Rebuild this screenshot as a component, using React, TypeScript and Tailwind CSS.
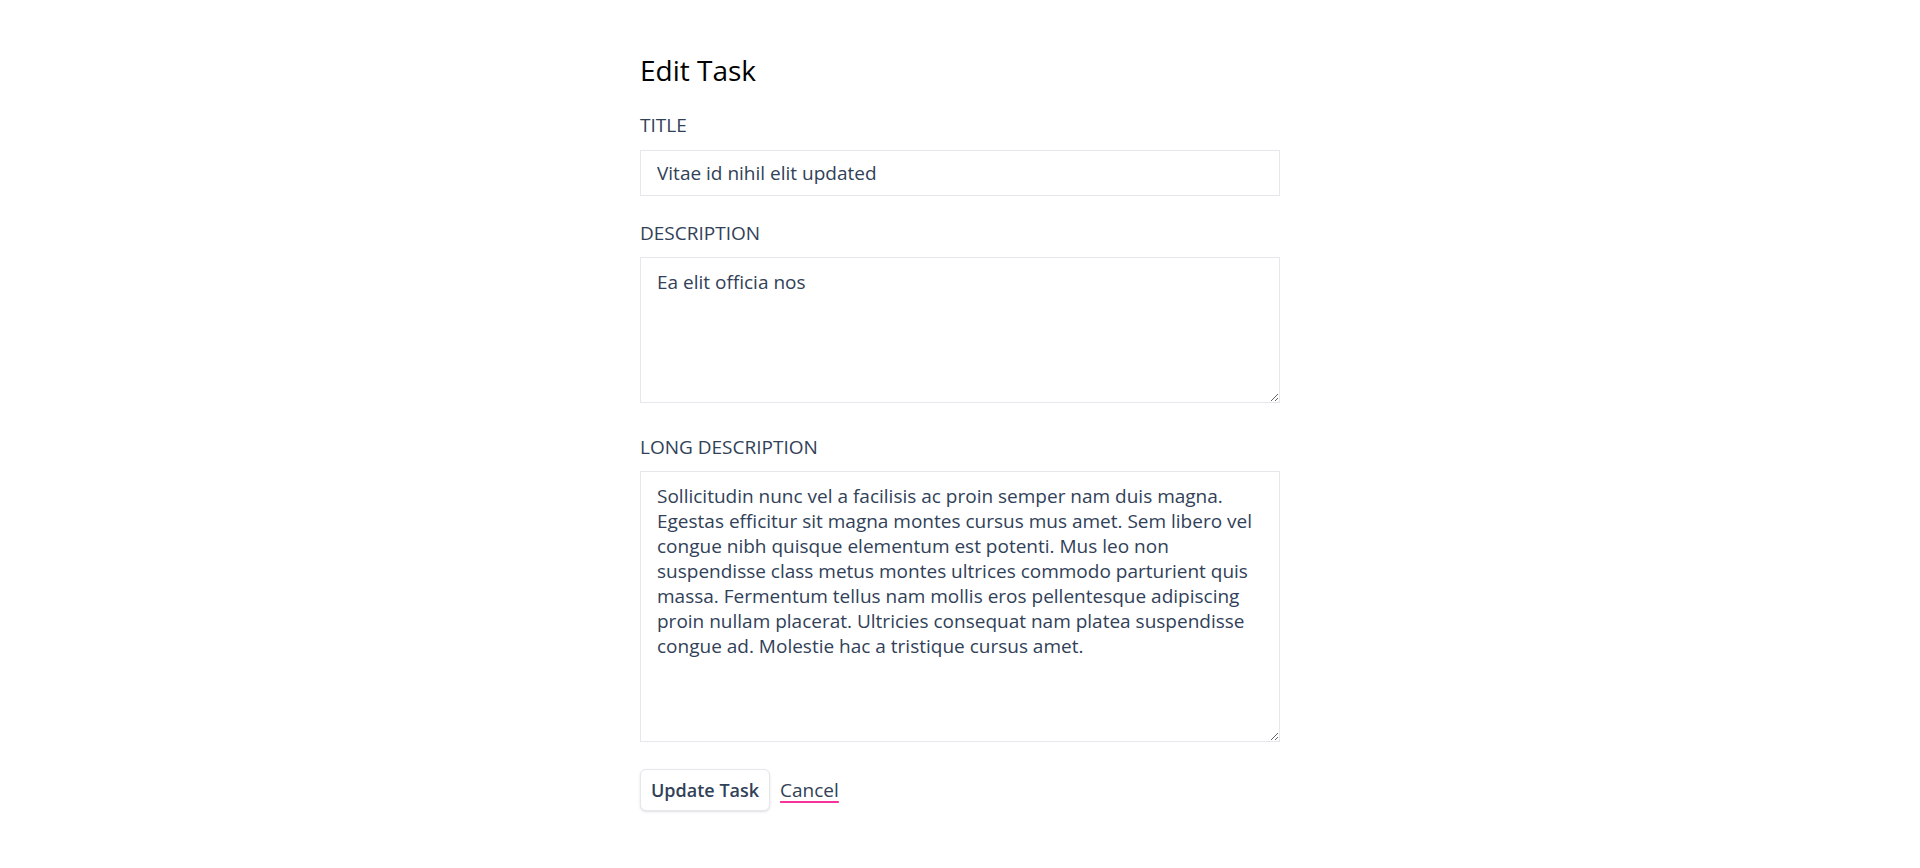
import { useState } from 'react'

const font = { fontFamily: '"Segoe UI", "Open Sans", "Noto Sans", sans-serif' }

export default function App() {
  const [title, setTitle] = useState('Vitae id nihil elit updated')
  const [description, setDescription] = useState('Ea elit officia nos')
  const [longDescription, setLongDescription] = useState(
    'Sollicitudin nunc vel a facilisis ac proin semper nam duis magna. Egestas efficitur sit magna montes cursus mus amet. Sem libero vel congue nibh quisque elementum est potenti. Mus leo non suspendisse class metus montes ultrices commodo parturient quis massa. Fermentum tellus nam mollis eros pellentesque adipiscing proin nullam placerat. Ultricies consequat nam platea suspendisse congue ad. Molestie hac a tristique cursus amet.'
  )

  return (
    <div className="min-h-screen bg-white" style={font}>
      <div className="mx-auto w-[640px] pt-[52px] pb-10">
        {/* heading */}
        <h1 className="text-[28px] leading-9 font-normal text-black">Edit Task</h1>

        <form onSubmit={(e) => e.preventDefault()}>
          {/* title */}
          <label className="mt-[23px] block text-[19px] leading-7 uppercase text-slate-700">Title</label>
          <input
            type="text"
            value={title}
            onChange={(e) => setTitle(e.target.value)}
            className="mt-[11px] block h-[46px] w-full border border-gray-200 bg-white px-4 py-[10px]
              text-[19px] leading-6 text-slate-700 focus:outline-none"
          />

          {/* description */}
          <label className="mt-[23px] block text-[19px] leading-7 uppercase text-slate-700">Description</label>
          <textarea
            value={description}
            onChange={(e) => setDescription(e.target.value)}
            className="mt-[10px] block h-[146px] w-full border border-gray-200 bg-white px-4 py-3
              text-[19px] leading-[25px] text-slate-700 focus:outline-none"
          />

          {/* long description */}
          <label className="mt-[30px] block text-[19px] leading-7 uppercase text-slate-700">Long Description</label>
          <textarea
            value={longDescription}
            onChange={(e) => setLongDescription(e.target.value)}
            className="mt-[10px] block h-[271px] w-full border border-gray-200 bg-white px-4 py-3
              text-[19px] leading-[25px] text-slate-700 focus:outline-none"
          />

          {/* actions */}
          <div className="mt-[27px] flex items-center gap-2.5">
            <button
              type="submit"
              className="h-[42px] rounded-md border border-gray-200 bg-white px-2.5 text-lg font-semibold
                text-slate-700 shadow-sm"
            >
              Update Task
            </button>
            <a
              href="#"
              className="text-[19px] font-medium text-slate-700 underline decoration-pink-500 decoration-2 underline-offset-4"
            >
              Cancel
            </a>
          </div>
        </form>
      </div>
    </div>
  )
}
